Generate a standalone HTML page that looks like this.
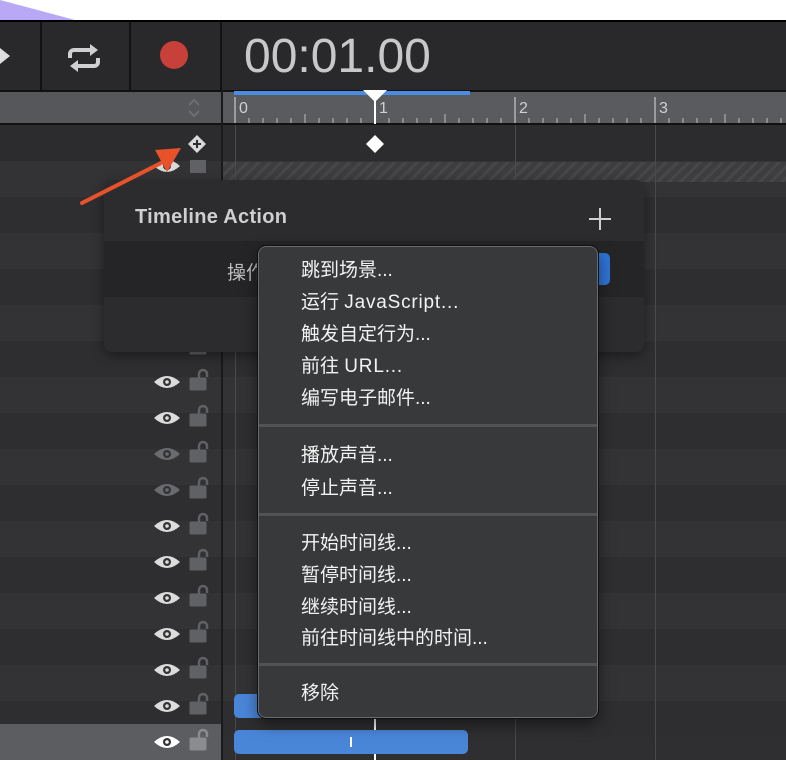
<!DOCTYPE html>
<html><head><meta charset="utf-8"><style>
*{margin:0;padding:0;box-sizing:border-box}
body{width:786px;height:760px;overflow:hidden;background:#2f2f32;position:relative;font-family:"Liberation Sans","Noto Sans CJK SC",sans-serif}
.a{position:absolute}
.row{position:absolute;left:0;width:786px;height:36px}
.mi{position:absolute;left:42px;color:#f2f2f2;font-size:19px;line-height:24px}
.mi span{letter-spacing:0.8px}
.sep{position:absolute;left:0;right:0;height:3px;background:#525355}
</style></head><body>
<div class="a" style="left:0;top:0;width:786px;height:20px;background:#fff"></div>
<svg class="a" style="left:0;top:0" width="80" height="20"><polygon points="0,0 75,20 0,20" fill="#b8a8f5"/></svg>
<div class="a" style="left:0;top:20px;width:786px;height:70px;background:#29292b;border-top:2px solid #000"></div>
<div class="a" style="left:40px;top:22px;width:2px;height:68px;background:#111"></div>
<div class="a" style="left:129px;top:22px;width:2px;height:68px;background:#111"></div>
<div class="a" style="left:220px;top:22px;width:2px;height:68px;background:#111"></div>
<svg class="a" style="left:0;top:46px" width="12" height="20"><polygon points="0,2 10,10 0,18" fill="#ddd"/></svg>
<svg class="a" style="left:66px;top:42px" width="36" height="32" viewBox="0 0 36 32"><path d="M4 16 V12 a4 4 0 0 1 4-4 H26" fill="none" stroke="#d0d0d0" stroke-width="4"/><polygon points="24,2 32,8 24,14" fill="#d0d0d0"/><path d="M32 16 V20 a4 4 0 0 1 -4 4 H10" fill="none" stroke="#d0d0d0" stroke-width="4"/><polygon points="12,18 4,24 12,30" fill="#d0d0d0"/></svg>
<div class="a" style="left:160px;top:41px;width:28px;height:28px;border-radius:50%;background:#c8403a"></div>
<div class="a" style="left:244px;top:30px;color:#c8c8c8;font-size:48px;line-height:54px">00:01.00</div>
<div class="a" style="left:0;top:90px;width:221px;height:35px;background:#56575a;border-top:2px solid #111;border-bottom:2px solid #111"></div>
<div class="a" style="left:223px;top:90px;width:563px;height:35px;background:#5a5b5e;border-top:2px solid #111;border-bottom:2px solid #111"></div>
<div class="a" style="left:221px;top:90px;width:2px;height:670px;background:#1a1a1b"></div>
<svg class="a" style="left:186px;top:96px" width="16" height="24"><path d="M3 9 L8 4 L13 9 M3 15 L8 20 L13 15" stroke="#6e6f72" stroke-width="2" fill="none"/></svg>
<div class="a" style="left:234px;top:91px;width:236px;height:4px;background:#4a8de0"></div>
<svg class="a" style="left:223px;top:92px" width="563" height="33">
<g stroke="#c8c8c8" stroke-width="1.2">
<line x1="12" y1="5" x2="12" y2="31"/><line x1="152" y1="5" x2="152" y2="31"/><line x1="292" y1="5" x2="292" y2="31"/><line x1="432" y1="5" x2="432" y2="31"/>
</g>
<g stroke="#bbb" stroke-width="1">
<path d="M26 26v5M40 26v5M54 26v5M68 26v5M82 22v9M96 26v5M110 26v5M124 26v5M138 26v5M166 26v5M180 26v5M194 26v5M208 26v5M222 22v9M236 26v5M250 26v5M264 26v5M278 26v5M306 26v5M320 26v5M334 26v5M348 26v5M362 22v9M376 26v5M390 26v5M404 26v5M418 26v5M446 26v5M460 26v5M474 26v5M488 26v5M502 22v9M516 26v5M530 26v5M544 26v5M558 26v5"/>
</g>
<g fill="#d0d0d0" font-size="16" font-family="Liberation Sans"><text x="16" y="21">0</text><text x="156" y="21">1</text><text x="296" y="21">2</text><text x="436" y="21">3</text></g>
</svg>
<div class="row" style="top:125px;background:#2c2c2f"></div>
<div class="row" style="top:161px;background:#333336"></div>
<div class="row" style="top:197px;background:#2e2e31"></div>
<div class="row" style="top:233px;background:#333336"></div>
<div class="row" style="top:269px;background:#2e2e31"></div>
<div class="row" style="top:305px;background:#333336"></div>
<div class="row" style="top:341px;background:#2e2e31"></div>
<div class="row" style="top:377px;background:#333336"></div>
<div class="row" style="top:413px;background:#2e2e31"></div>
<div class="row" style="top:449px;background:#333336"></div>
<div class="row" style="top:485px;background:#2e2e31"></div>
<div class="row" style="top:521px;background:#333336"></div>
<div class="row" style="top:557px;background:#2e2e31"></div>
<div class="row" style="top:593px;background:#333336"></div>
<div class="row" style="top:629px;background:#2e2e31"></div>
<div class="row" style="top:665px;background:#333336"></div>
<div class="row" style="top:701px;background:#2e2e31"></div>
<div class="row" style="top:724px;width:221px;height:36px;background:#5b5d61"></div>
<div class="a" style="left:221px;top:125px;width:2px;height:635px;background:#1a1a1b"></div>
<svg class="a" style="left:223px;top:162px" width="563" height="20"><defs><pattern id="h" width="8" height="8" patternUnits="userSpaceOnUse" patternTransform="rotate(45)"><rect width="8" height="8" fill="#3d3d40"/><rect width="3" height="8" fill="#47474a"/></pattern></defs><rect width="563" height="20" fill="url(#h)"/></svg>
<div class="a" style="left:235px;top:125px;width:1px;height:635px;background:#4a4a4d"></div>
<div class="a" style="left:515px;top:125px;width:1px;height:635px;background:#4a4a4d"></div>
<div class="a" style="left:655px;top:125px;width:1px;height:635px;background:#4a4a4d"></div>
<div class="a" style="left:374px;top:92px;width:2px;height:32px;background:#fff"></div>
<svg class="a" style="left:363px;top:90px" width="24" height="12"><polygon points="0,0 24,0 12,12" fill="#fff"/></svg>
<div class="a" style="left:374px;top:718px;width:2px;height:42px;background:#fff"></div>
<svg class="a" style="left:365px;top:134px" width="20" height="20"><polygon points="10,1 19,10 10,19 1,10" fill="#fff"/></svg>
<svg class="a" style="left:187px;top:134px" width="20" height="20"><polygon points="10,1 19,10 10,19 1,10" fill="#d8d8d8"/><path d="M10 6v8M6 10h8" stroke="#2c2c2f" stroke-width="2"/></svg>
<svg class="a" style="left:150px;top:150px" width="60" height="610">
<defs>
<g id="e"><path d="M1 0 Q14 -12 27 0 Q14 12 1 0Z"/><circle cx="14" cy="0" r="4" fill="#333"/><circle cx="14" cy="0" r="1.8"/></g>
<g id="l"><rect x="0" y="-4" width="16" height="12" rx="1"/><path d="M9 -4 v-4 a4 4 0 0 1 8 0 v3" fill="none" stroke-width="2.5"/></g>
</defs>
<g fill="#d8d8d8"><use href="#e" x="3" y="16"/></g>
<rect x="40" y="10" width="16" height="13" fill="#606164"/>
<g fill="#dcdcdc"><use href="#e" x="3" y="196"/><use href="#e" x="3" y="232"/><use href="#e" x="3" y="268"/></g>
<g fill="#6a6b6e"><use href="#e" x="3" y="304"/><use href="#e" x="3" y="340"/></g>
<g fill="#dcdcdc"><use href="#e" x="3" y="376"/><use href="#e" x="3" y="412"/><use href="#e" x="3" y="448"/><use href="#e" x="3" y="484"/><use href="#e" x="3" y="520"/><use href="#e" x="3" y="556"/></g>
<g fill="#fff"><use href="#e" x="3" y="592"/></g>
<g fill="#606164" stroke="#606164"><use href="#l" x="40" y="196"/><use href="#l" x="40" y="232"/><use href="#l" x="40" y="268"/><use href="#l" x="40" y="304"/><use href="#l" x="40" y="340"/><use href="#l" x="40" y="376"/><use href="#l" x="40" y="412"/><use href="#l" x="40" y="448"/><use href="#l" x="40" y="484"/><use href="#l" x="40" y="520"/><use href="#l" x="40" y="556"/></g>
<g fill="#8a8c90" stroke="#8a8c90"><use href="#l" x="40" y="592"/></g>
</svg>
<div class="a" style="left:234px;top:694px;width:60px;height:24px;border-radius:5px;background:#4a86d8"></div>
<div class="a" style="left:234px;top:730px;width:234px;height:24px;border-radius:5px;background:#4a86d8"></div>
<div class="a" style="left:350px;top:737px;width:2px;height:10px;background:#fff"></div>
<div class="a" style="left:104px;top:180px;width:540px;height:172px;background:#2c2c2f;border-radius:8px;box-shadow:0 4px 12px rgba(0,0,0,.4)"></div>
<div class="a" style="left:104px;top:241px;width:540px;height:56px;background:#252527"></div>
<div class="a" style="left:135px;top:206px;color:#cfcfcf;font-size:20px;font-weight:bold;letter-spacing:0.3px">Timeline Action</div>
<svg class="a" style="left:588px;top:207px" width="24" height="24"><path d="M12 1v22M1 12h22" stroke="#cfcfcf" stroke-width="2"/></svg>
<div class="a" style="left:227px;top:258px;color:#bdbdbd;font-size:19px">操作</div>
<div class="a" style="left:594px;top:253px;width:16px;height:32px;border-radius:5px;background:#2f74d6"></div>
<svg class="a" style="left:75px;top:140px" width="120" height="70"><line x1="7" y1="63" x2="92" y2="20" stroke="#e8522b" stroke-width="4" stroke-linecap="round"/><polygon points="106,8 80,10 92,32" fill="#e8522b"/></svg>
<div class="a" style="left:258px;top:246px;width:340px;height:472px;background:#38393b;border:1px solid #6a6b6e;outline:1px solid #111;border-radius:8px;box-shadow:0 6px 16px rgba(0,0,0,.5)">
<div class="mi" style="top:12px">跳到场景...</div>
<div class="mi" style="top:44px">运行 <span>JavaScript...</span></div>
<div class="mi" style="top:76px">触发自定行为...</div>
<div class="mi" style="top:108px">前往 <span>URL...</span></div>
<div class="mi" style="top:140px">编写电子邮件...</div>
<div class="sep" style="top:177px"></div>
<div class="mi" style="top:197px">播放声音...</div>
<div class="mi" style="top:230px">停止声音...</div>
<div class="sep" style="top:266px"></div>
<div class="mi" style="top:285px">开始时间线...</div>
<div class="mi" style="top:317px">暂停时间线...</div>
<div class="mi" style="top:349px">继续时间线...</div>
<div class="mi" style="top:380px">前往时间线中的时间...</div>
<div class="sep" style="top:416px"></div>
<div class="mi" style="top:435px">移除</div>
</div>
</body></html>
